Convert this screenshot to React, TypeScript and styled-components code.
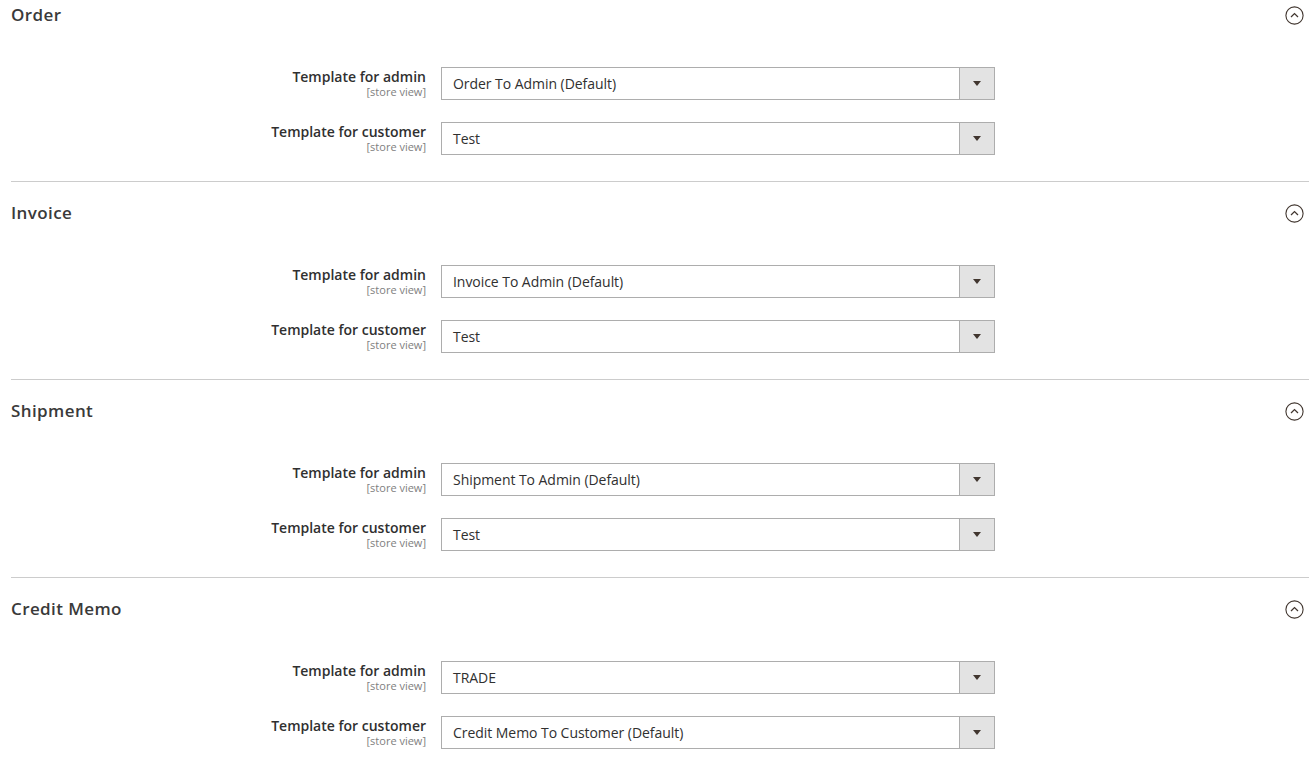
import React from 'react';
import styled, { createGlobalStyle } from 'styled-components';

const GlobalStyle = createGlobalStyle`
    html, body {
        margin: 0;
        padding: 0;
        background: #ffffff;
    }
    body {
        font-family: 'Open Sans', 'Liberation Sans', Arial, sans-serif;
        color: #303030;
    }
`;

const Page = styled.div`
    padding-left: 11px;
`;

const Section = styled.section`
    border-top: 1px solid #cccccc;
    padding: 16px 0 26px;

    &:first-child {
        border-top: none;
        padding-top: 0;
    }
`;

const SectionHeader = styled.div`
    display: flex;
    align-items: center;
    justify-content: space-between;
    height: 30px;
    padding-right: 5px;
`;

const SectionTitle = styled.h3`
    margin: 0;
    font-size: 17px;
    font-weight: 600;
    line-height: 30px;
    color: #3a3a3a;
    letter-spacing: 0.4px;
`;

const Fields = styled.div`
    display: flex;
    flex-direction: column;
    gap: 22px;
    margin-top: 37px;
`;

const FieldRow = styled.div`
    display: grid;
    grid-template-columns: 415px 554px;
    column-gap: 15px;
    align-items: start;
`;

const Label = styled.div`
    text-align: right;
`;

const LabelText = styled.div`
    font-size: 14px;
    font-weight: 600;
    line-height: 19px;
    color: #303030;
`;

const Scope = styled.div`
    font-size: 11px;
    line-height: 12px;
    color: #808080;
`;

const Select = styled.div`
    display: flex;
    height: 33px;
    box-sizing: border-box;
    border: 1px solid #adadad;
    background: #ffffff;
`;

const SelectValue = styled.div`
    flex: 1;
    padding-left: 11px;
    font-size: 14px;
    line-height: 31px;
    color: #303030;
    letter-spacing: -0.05px;
`;

const SelectButton = styled.div`
    width: 34px;
    border-left: 1px solid #adadad;
    background: #e3e3e3;
    display: flex;
    align-items: center;
    justify-content: center;
`;

const Arrow = styled.span`
    width: 0;
    height: 0;
    border-left: 4px solid transparent;
    border-right: 4px solid transparent;
    border-top: 5px solid #41362f;
`;

const CollapseIcon = () => (
    <svg width="19" height="19" viewBox="0 0 19 19">
        <circle cx="9.5" cy="9.5" r="8.6" fill="none" stroke="#41362f" strokeWidth="1.1" />
        <path d="M6 11 L9.5 7.6 L13 11" fill="none" stroke="#41362f" strokeWidth="1.3" />
    </svg>
);

type Field = { label: string; value: string };

type GroupData = { title: string; fields: Field[] };

const groups: GroupData[] = [
    {
        title: 'Order',
        fields: [
            { label: 'Template for admin', value: 'Order To Admin (Default)' },
            { label: 'Template for customer', value: 'Test' },
        ],
    },
    {
        title: 'Invoice',
        fields: [
            { label: 'Template for admin', value: 'Invoice To Admin (Default)' },
            { label: 'Template for customer', value: 'Test' },
        ],
    },
    {
        title: 'Shipment',
        fields: [
            { label: 'Template for admin', value: 'Shipment To Admin (Default)' },
            { label: 'Template for customer', value: 'Test' },
        ],
    },
    {
        title: 'Credit Memo',
        fields: [
            { label: 'Template for admin', value: 'TRADE' },
            { label: 'Template for customer', value: 'Credit Memo To Customer (Default)' },
        ],
    },
];

const App = (): React.ReactElement => {
    return (
        <Page>
            <GlobalStyle />
            {groups.map((group) => (
                <Section key={group.title}>
                    <SectionHeader>
                        <SectionTitle>{group.title}</SectionTitle>
                        <CollapseIcon />
                    </SectionHeader>
                    <Fields>
                        {group.fields.map((field) => (
                            <FieldRow key={field.label}>
                                <Label>
                                    <LabelText>{field.label}</LabelText>
                                    <Scope>[store view]</Scope>
                                </Label>
                                <Select>
                                    <SelectValue>{field.value}</SelectValue>
                                    <SelectButton>
                                        <Arrow />
                                    </SelectButton>
                                </Select>
                            </FieldRow>
                        ))}
                    </Fields>
                </Section>
            ))}
        </Page>
    );
};

export default App;
